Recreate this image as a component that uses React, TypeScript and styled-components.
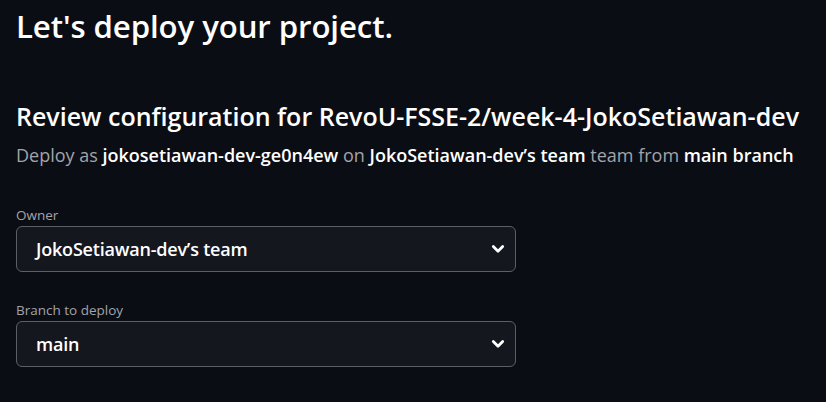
import React from "react";
import styled, { createGlobalStyle } from "styled-components";

const Global = createGlobalStyle`
  html, body { margin: 0; padding: 0; background: #0b0d14; }
  body { font-family: "Open Sans", "Noto Sans", sans-serif; color: #ffffff; }
  * { box-sizing: border-box; }
`;

const Page = styled.div`
  width: 826px;
  height: 402px;
  overflow: hidden;
  padding: 4px 16px 0 16px;
  background: #0b0d14;
`;

const Title = styled.h1`
  margin: 0;
  font-size: 31.2px;
  font-weight: 600;
  line-height: 44px;
  letter-spacing: -0.1px;
`;

const Heading = styled.h2`
  margin: 51px 0 0 0;
  font-size: 25px;
  font-weight: 600;
  line-height: 34px;
`;

const Sub = styled.p`
  margin: 9px 0 0 0;
  font-size: 18px;
  line-height: 26px;
  color: #a1a4ab;
  b { color: #ffffff; font-weight: 600; }
`;

const Field = styled.div<{ $top: number }>`
  display: flex;
  flex-direction: column;
  gap: 2px;
  width: 500px;
  margin-top: ${(p) => p.$top}px;
`;

const Label = styled.label`
  font-size: 13.5px;
  line-height: 18px;
  color: #a1a4ab;
`;

const Select = styled.div`
  height: 46px;
  display: flex;
  align-items: center;
  justify-content: space-between;
  padding: 0 10px 0 19px;
  background: #14171e;
  border: 1px solid #5b5f67;
  border-radius: 6px;
  font-size: 18px;
  font-weight: 600;
  letter-spacing: -0.2px;
`;

const Chevron = () => (
  <svg width="14" height="14" viewBox="0 0 14 14" fill="none">
    <path d="M2.3 4.6 L7 9.2 L11.7 4.6" stroke="#fff" strokeWidth="2.8" strokeLinecap="round" strokeLinejoin="round" />
  </svg>
);

export default function App() {
  return (
    <Page>
      <Global />
      <Title>Let's deploy your project.</Title>
      <Heading>Review configuration for RevoU-FSSE-2/week-4-JokoSetiawan-dev</Heading>
      <Sub>
        Deploy as <b>jokosetiawan-dev-ge0n4ew</b> on <b>JokoSetiawan-dev’s team</b> team from <b>main branch</b>
      </Sub>
      <Field $top={38}>
        <Label>Owner</Label>
        <Select>
          <span>JokoSetiawan-dev’s team</span>
          <Chevron />
        </Select>
      </Field>
      <Field $top={29}>
        <Label>Branch to deploy</Label>
        <Select>
          <span>main</span>
          <Chevron />
        </Select>
      </Field>
    </Page>
  );
}
